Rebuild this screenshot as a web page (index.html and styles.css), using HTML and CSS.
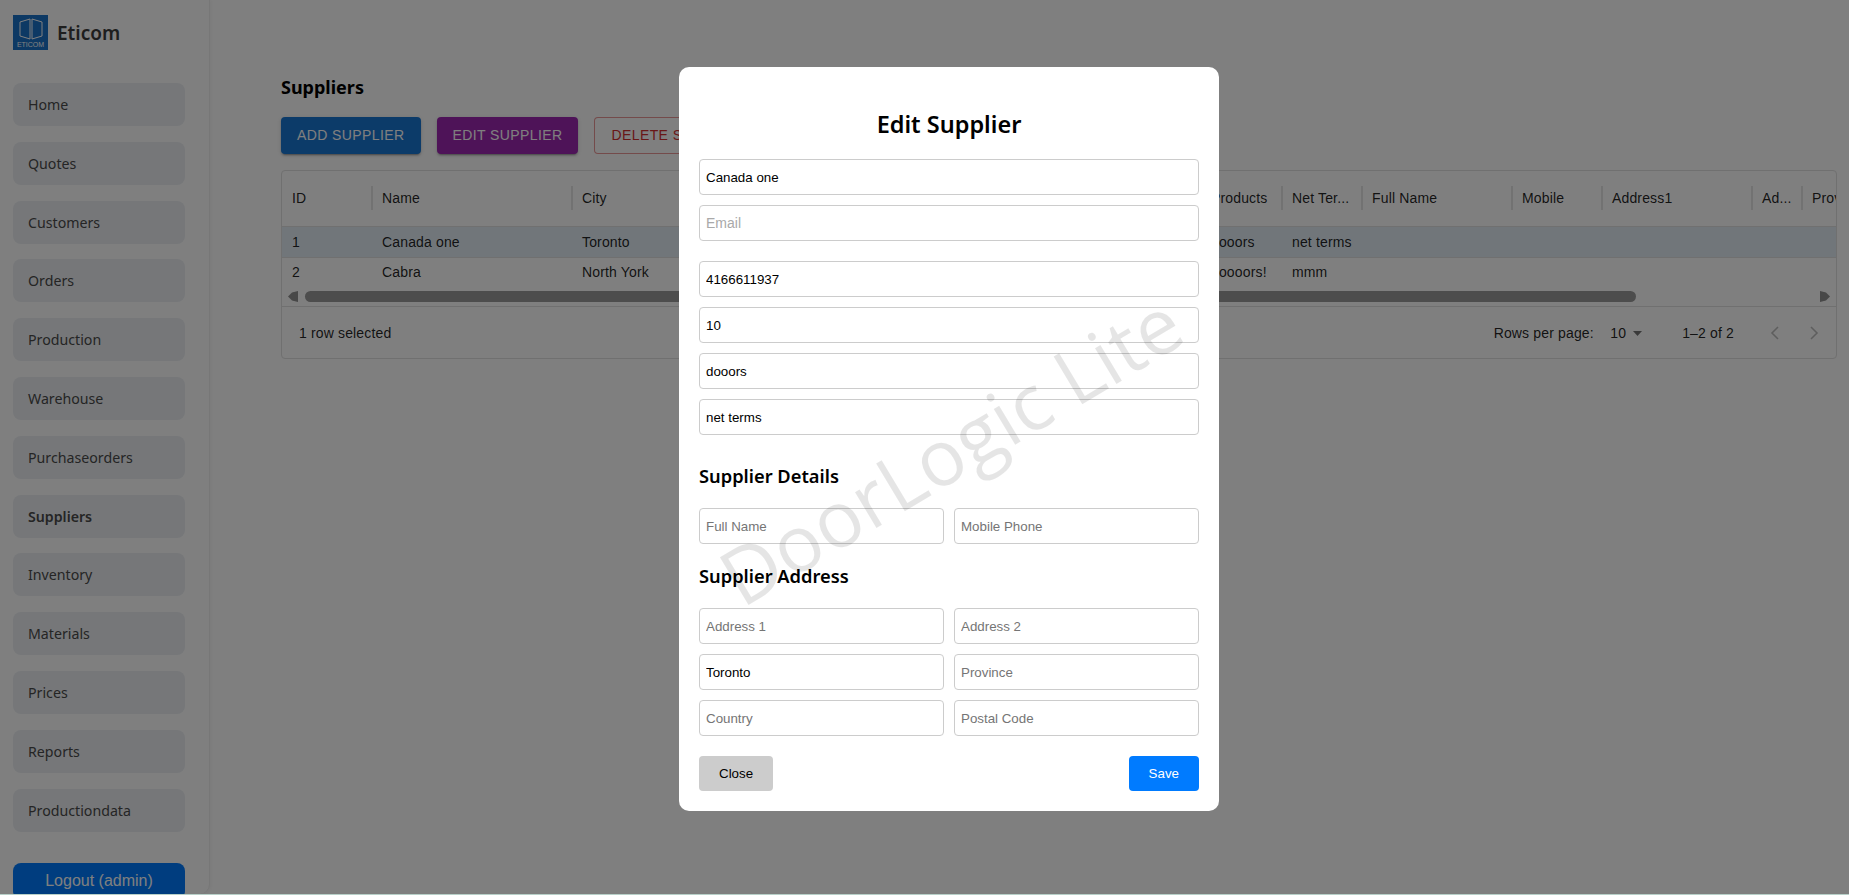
FILE: index.html
```html
<!DOCTYPE html>
<html lang="en">
<head>
<meta charset="utf-8">
<title>Suppliers</title>
<link rel="stylesheet" href="styles.css">
</head>
<body>
<div class="stage">
  <aside class="sidebar">
    <div class="brand">
      <svg class="logo" viewBox="0 0 35 35" width="35" height="35">
        <rect width="35" height="35" fill="#1a72c8"/>
        <path d="M17 4 L7 7 V21 L17 24 Z M19 4 L29 7 V21 L19 24 Z" fill="none" stroke="#fff" stroke-width="1"/>
        <text x="17.5" y="32" text-anchor="middle" class="logo-text">ETICOM</text>
      </svg>
      <span class="brand-name">Eticom</span>
    </div>
    <nav class="nav">
      <a class="nav-item">Home</a>
      <a class="nav-item">Quotes</a>
      <a class="nav-item">Customers</a>
      <a class="nav-item">Orders</a>
      <a class="nav-item">Production</a>
      <a class="nav-item">Warehouse</a>
      <a class="nav-item">Purchaseorders</a>
      <a class="nav-item nav-active">Suppliers</a>
      <a class="nav-item">Inventory</a>
      <a class="nav-item">Materials</a>
      <a class="nav-item">Prices</a>
      <a class="nav-item">Reports</a>
      <a class="nav-item">Productiondata</a>
    </nav>
    <button class="logout">Logout (admin)</button>
  </aside>

  <main class="main">
    <h1 class="page-title">Suppliers</h1>
    <div class="actions">
      <button class="btn btn-add">ADD SUPPLIER</button>
      <button class="btn btn-edit">EDIT SUPPLIER</button>
      <button class="btn btn-delete">DELETE SUPPLIER</button>
    </div>
    <div class="grid">
      <div class="row head">
        <div class="cell">ID</div><div class="cell">Name</div><div class="cell">City</div><div class="cell">Email</div><div class="cell">Phone</div><div class="cell">Discount</div><div class="cell">Products</div><div class="cell">Net Ter...</div><div class="cell">Full Name</div><div class="cell">Mobile</div><div class="cell">Address1</div><div class="cell">Ad...</div><div class="cell">Province</div>
      </div>
      <div class="row body selected">
        <div class="cell">1</div><div class="cell">Canada one</div><div class="cell">Toronto</div><div class="cell"></div><div class="cell">4166611937</div><div class="cell">10</div><div class="cell">dooors</div><div class="cell">net terms</div><div class="cell"></div><div class="cell"></div><div class="cell"></div><div class="cell"></div><div class="cell"></div>
      </div>
      <div class="row body last">
        <div class="cell">2</div><div class="cell">Cabra</div><div class="cell">North York</div><div class="cell"></div><div class="cell"></div><div class="cell"></div><div class="cell">doooors!</div><div class="cell">mmm</div><div class="cell"></div><div class="cell"></div><div class="cell"></div><div class="cell"></div><div class="cell"></div>
      </div>
      <div class="scrollbar">
        <svg class="arrow" viewBox="0 0 10 11" width="10" height="11"><path d="M0 5.5 L4 1.5 L10 0 V11 L4 9.5 Z"/></svg>
        <div class="thumb"></div>
        <svg class="arrow arrow-right" viewBox="0 0 10 11" width="10" height="11"><path d="M10 5.5 L6 1.5 L0 0 V11 L6 9.5 Z"/></svg>
      </div>
      <div class="grid-footer">
        <span class="selected-count">1 row selected</span>
        <div class="pager">
          <span>Rows per page:</span>
          <span class="page-size">10</span>
          <svg class="caret" viewBox="0 0 9 5" width="9" height="5"><path d="M0 0 H9 L4.5 5 Z"/></svg>
          <span class="page-range">1–2 of 2</span>
          <svg class="chev chev-prev" viewBox="0 0 9 14" width="9" height="14"><path d="M8 1 L2 7 L8 13"/></svg>
          <svg class="chev chev-next" viewBox="0 0 9 14" width="9" height="14"><path d="M1 1 L7 7 L1 13"/></svg>
        </div>
      </div>
    </div>
  </main>

  <div class="overlay">
    <form class="modal">
      <h2 class="modal-title">Edit Supplier</h2>
      <div class="stack">
        <input class="input" type="text" value="Canada one">
        <input class="input input-email" type="text" placeholder="Email">
        <input class="input" type="text" value="4166611937">
        <input class="input" type="text" value="10">
        <input class="input" type="text" value="dooors">
        <input class="input" type="text" value="net terms">
      </div>
      <h3 class="section-title section-details">Supplier Details</h3>
      <div class="pair">
        <input class="input" type="text" placeholder="Full Name">
        <input class="input" type="text" placeholder="Mobile Phone">
      </div>
      <h3 class="section-title section-address">Supplier Address</h3>
      <div class="pair">
        <input class="input" type="text" placeholder="Address 1">
        <input class="input" type="text" placeholder="Address 2">
        <input class="input" type="text" value="Toronto">
        <input class="input" type="text" placeholder="Province">
        <input class="input" type="text" placeholder="Country">
        <input class="input" type="text" placeholder="Postal Code">
      </div>
      <div class="modal-actions">
        <button type="button" class="modal-btn btn-close">Close</button>
        <button type="button" class="modal-btn btn-save">Save</button>
      </div>
    </form>
  </div>
  <div class="watermark">DoorLogic Lite</div>
</div>
</body>
</html>
```

FILE: styles.css
```css
* { box-sizing: border-box; }
html, body { margin: 0; height: 895px; overflow: hidden; background: #b8d0c8; }
body { font-family: "Liberation Sans", Arial, sans-serif; font-size: 14px; color: #000; }

.stage { position: relative; display: flex; height: 894px; overflow: hidden; background: #fff; }

/* Sidebar */
.sidebar {
  width: 210px; flex: none; height: 894px; overflow: hidden;
  padding: 15px 24px 0 13px; background: #fff;
  border-right: 1px solid #eee; border-bottom-right-radius: 10px;
  box-shadow: 1px 0 4px rgba(0,0,0,.05);
}
.brand { display: flex; align-items: center; height: 35px; }
.logo { display: block; }
.logo-text { font-family: "Liberation Sans", sans-serif; font-size: 7px; fill: #fff; }
.brand-name { margin-left: 9px; font-family: "Noto Sans", sans-serif; font-weight: 600; font-size: 19px; color: #3c3c3c; }
.nav { display: grid; gap: 15.8px; margin-top: 33px; }
.nav-item {
  display: flex; align-items: center; height: 43px; padding-left: 15px;
  border-radius: 8px; background: #eceff3; color: #4a4a4a;
  font-family: "Noto Sans", sans-serif; font-size: 14.2px;
}
.nav-active { font-weight: 600; }
.logout {
  display: block; width: 172px; height: 36px; margin-top: 31.4px; border: 0; border-radius: 8px;
  background: #007bff; color: #fff; font: 16px "Liberation Sans", Arial, sans-serif;
}

/* Main */
.main { flex: 1; min-width: 0; padding: 75px 12px 0 71px; }
.page-title { margin: 0; font-family: "Noto Sans", sans-serif; font-size: 18px; line-height: 24px; font-weight: 700; }
.actions { display: flex; gap: 16px; margin-top: 18px; }
.btn {
  height: 37px; padding: 0 16px 2px; border: 0; border-radius: 4px; color: #fff;
  font: 14px "Liberation Sans", Arial, sans-serif; letter-spacing: .4px;
  box-shadow: 0 3px 1px -2px rgba(0,0,0,.2), 0 2px 2px rgba(0,0,0,.14), 0 1px 5px rgba(0,0,0,.12);
}
.btn-add { background: #1976d2; }
.btn-edit { background: #9c27b0; }
.btn-delete { background: #fff; color: #d32f2f; border: 1px solid rgba(211,47,47,.5); box-shadow: none; }

/* Data grid */
.grid { height: 189px; margin-top: 16px; border: 1px solid #e0e0e0; border-radius: 4px; overflow: hidden; color: rgba(0,0,0,.87); letter-spacing: .15px; }
.row {
  display: grid; align-items: center; border-bottom: 1px solid #e0e0e0;
  grid-template-columns: 90px 200px 200px 200px 130px 99px 81px 80px 150px 90px 150px 50px 100px;
}
.head { height: 56px; padding-bottom: 2px; }
.body { height: 31px; }
.last { height: 28px; border-bottom: 0; }
.selected { background: #e3edf5; }
.cell { padding: 0 10px; white-space: nowrap; overflow: hidden; }
.head .cell { margin-left: -1px; border-left: 2px solid #e4e4e4; height: 24px; line-height: 24px; padding-left: 9px; }
.head .cell:first-child { margin-left: 0; border-left: 0; padding-left: 10px; }

.scrollbar { display: flex; align-items: center; height: 21px; padding: 0 6px; border-bottom: 1px solid #e0e0e0; }
.arrow { display: block; fill: #909090; flex: none; }
.arrow-right { margin-left: auto; }
.thumb { width: 1331px; height: 11px; margin-left: 7px; border-radius: 6px; background: #9a9a9a; }

.grid-footer { display: flex; align-items: center; height: 52px; padding: 0 0 0 17px; }
.pager { display: flex; align-items: center; margin-left: auto; }
.page-size { margin-left: 16.5px; }
.caret { margin-left: 7px; fill: rgba(0,0,0,.54); }
.page-range { margin-left: 40px; }
.chev { fill: none; stroke: rgba(0,0,0,.26); stroke-width: 1.6; }
.chev-prev { margin-left: 36px; }
.chev-next { margin-left: 31px; margin-right: 17px; }

/* Modal */
.overlay {
  position: absolute; inset: 0; display: flex; align-items: flex-start;
  padding: 67px 0 0 679px; background: rgba(0,0,0,.5);
}
.modal { width: 540px; height: 744px; padding: 41px 20px 20px; border-radius: 10px; background: #fff; }
.modal-title { margin: 0 0 19px; font-family: "Noto Sans", sans-serif; font-size: 23.5px; line-height: 32px; font-weight: 600; text-align: center; }
.stack { display: grid; gap: 10px; }
.input-email { margin-bottom: 10px; }
.input {
  display: block; width: 100%; height: 36px; padding: 0 6px; border: 1px solid #ccc; border-radius: 4px;
  background: transparent; color: #000; font: 13.33px "Liberation Sans", Arial, sans-serif;
}
.input::placeholder { color: #757575; opacity: 1; }
.input-email { font-size: 14px; }
.input-email::placeholder { color: #a9a9a9; }
.pair { display: grid; grid-template-columns: 1fr 1fr; gap: 10px; }
.section-title { margin: 0 0 20px; font-family: "Noto Sans", sans-serif; font-size: 18.3px; line-height: 24px; font-weight: 600; }
.section-details { margin-top: 29px; }
.section-address { margin-top: 20px; }
.modal-actions { display: flex; justify-content: space-between; margin-top: 20px; }
.modal-btn { height: 35px; padding: 0 20px; border: 0; border-radius: 4px; font: 13.33px "Liberation Sans", Arial, sans-serif; }
.btn-close { background: #ccc; color: #000; }
.btn-save { background: #007bff; color: #fff; }

/* Watermark lies over everything */
.watermark {
  position: absolute; left: 950px; top: 449px; transform: translate(-50%, -50%) rotate(-31deg);
  font-family: "Open Sans", sans-serif; font-size: 78px; color: rgba(0,0,0,.1);
  white-space: nowrap; pointer-events: none;
}
```
